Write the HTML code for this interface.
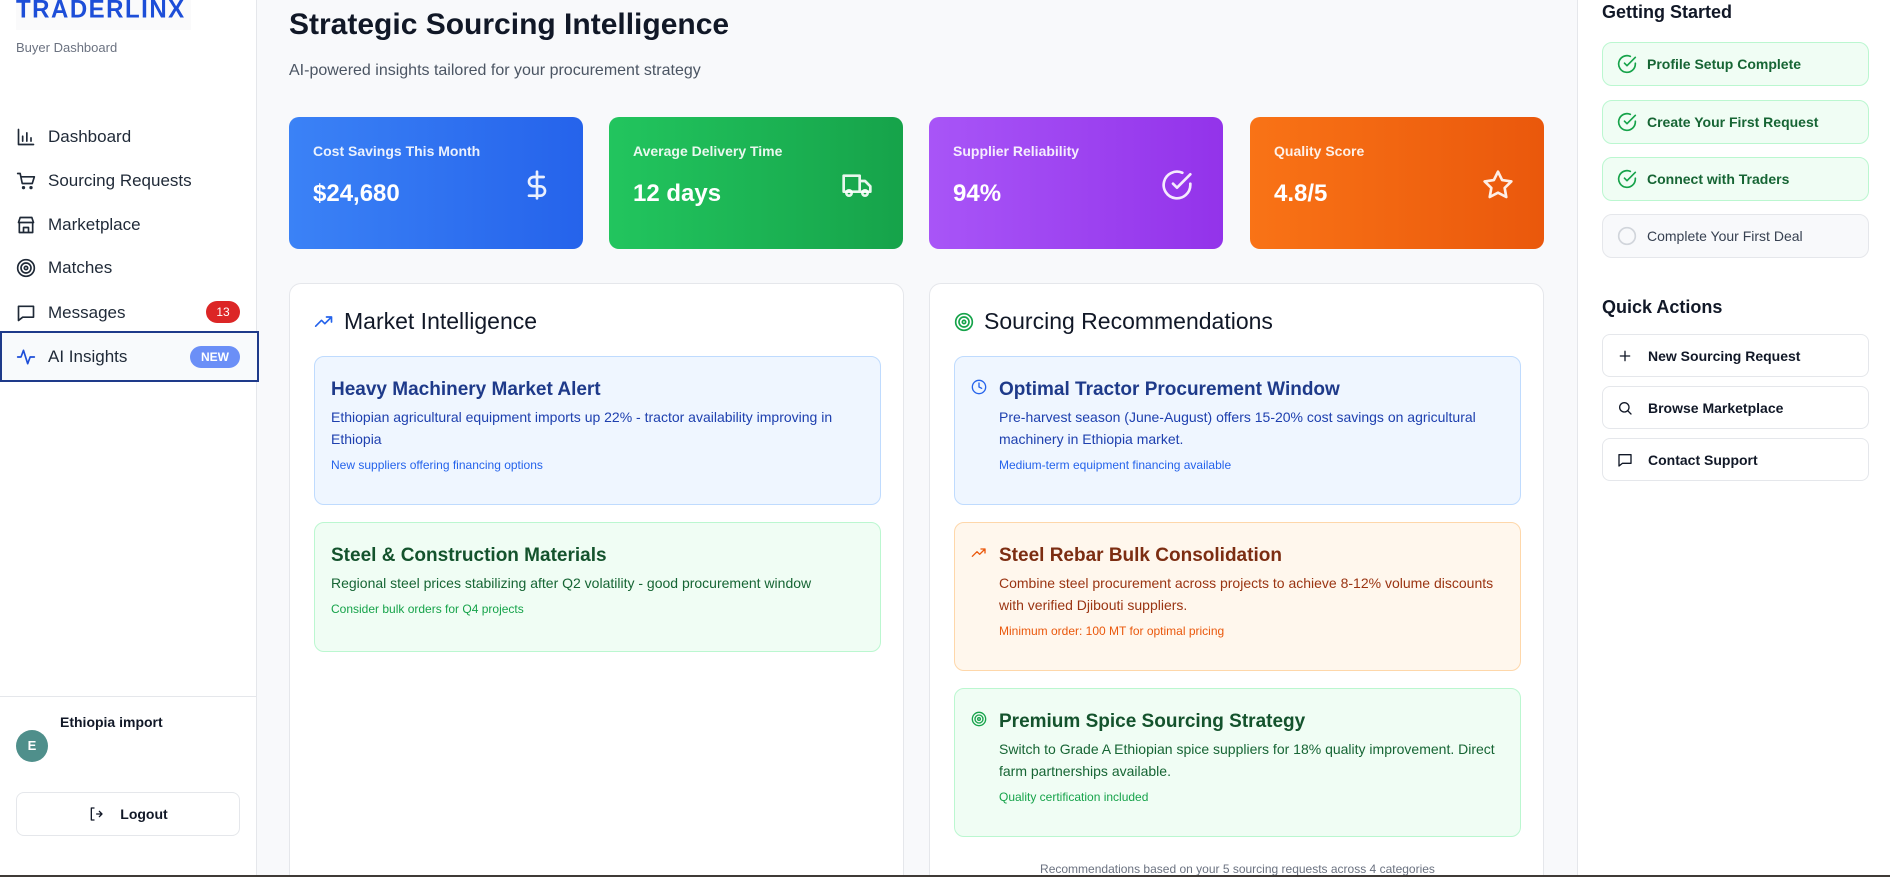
<!DOCTYPE html>
<html><head><meta charset="utf-8"><style>
*{box-sizing:border-box;margin:0;padding:0}
html{width:1890px;height:877px;overflow:hidden}
body{width:1890px;height:877px;overflow:hidden;background:#f8f9fb;font-family:"Liberation Sans",sans-serif;position:relative;color:#111827}
.abs{position:absolute}
.side{left:0;top:0;width:257px;height:877px;background:#fff;border-right:1px solid #e5e7eb}
.logo{left:16px;top:-4px;font-weight:900;font-size:24px;color:#1d4ed8;letter-spacing:1.5px;transform:scaleY(1.05)}
.nav{left:16px;font-size:17px;color:#1f2937;display:flex;align-items:center;height:24px}
.nav svg{width:20px;height:20px;margin-right:12px;fill:none;stroke:#1f2937;stroke-width:2;stroke-linecap:round;stroke-linejoin:round}
.stat{top:117px;width:294px;height:132px;border-radius:10px;color:#fff}
.stat .l{position:absolute;left:24px;top:26px;font-size:14px;font-weight:bold;opacity:.9}
.stat .v{position:absolute;left:24px;top:63px;font-size:24px;font-weight:bold}
.stat svg{position:absolute;right:30px;top:52px;width:32px;height:32px;fill:none;stroke:rgba(255,255,255,.9);stroke-width:2;stroke-linecap:round;stroke-linejoin:round}
.panel{top:283px;height:594px;background:#fff;border:1px solid #e5e7eb;border-bottom:none;border-radius:12px 12px 0 0}
.ph{position:absolute;top:24px;font-size:23px;color:#111827;display:flex;align-items:center}
.card{border-radius:10px;border:1px solid}
.card h3{position:absolute;top:22px;font-size:19px;font-weight:bold}
.card p{position:absolute;top:49px;font-size:14px;line-height:22px}
.card .n{position:absolute;font-size:12px}
.blue{background:#eff6ff;border-color:#bfdbfe}.blue h3{color:#1e3a8a}.blue p{color:#1e40af}.blue .n{color:#2563eb}
.green{background:#f0fdf4;border-color:#bbf7d0}.green h3{color:#14532d}.green p{color:#166534}.green .n{color:#16a34a}
.orange{background:#fff7ed;border-color:#fed7aa}.orange h3{color:#7c2d12}.orange p{color:#9a3412}.orange .n{color:#ea580c}
.right{left:1577px;top:0;width:313px;height:877px;background:#fff;border-left:1px solid #e5e7eb}
.gs{left:1602px;width:267px;height:44px;border-radius:10px;border:1px solid #bbf7d0;background:#f0fdf4;display:flex;align-items:center;font-size:14px;font-weight:bold;color:#166534;padding-left:14px}
.gs svg{width:20px;height:20px;margin-right:10px;fill:none;stroke:#16a34a;stroke-width:2;stroke-linecap:round;stroke-linejoin:round}
.qa{left:1602px;width:267px;height:43px;border-radius:8px;border:1px solid #e5e7eb;background:#fff;display:flex;align-items:center;font-size:14px;font-weight:bold;color:#111827;padding-left:14px}
.qa svg{width:16px;height:16px;margin-right:15px;fill:none;stroke:#111827;stroke-width:2;stroke-linecap:round;stroke-linejoin:round}
.ci{position:absolute;left:16px;top:22px;width:16px;height:16px;fill:none;stroke-width:2;stroke-linecap:round;stroke-linejoin:round}
</style></head><body>
<div class="abs side"></div>
<div class="abs" style="left:16px;top:0;width:175px;height:30px;background:#fafafb"></div>
<div class="abs logo">TRADERLINX</div>
<div class="abs" style="left:16px;top:40px;font-size:13px;color:#6b7280">Buyer Dashboard</div>

<div class="abs nav" style="top:125px"><svg viewBox="0 0 24 24"><path d="M3 3v18h18M8 17v-6M13 17V7M18 17v-4"/></svg>Dashboard</div>
<div class="abs nav" style="top:169px"><svg viewBox="0 0 24 24"><path d="M2 3h3l2.5 12h12L22 7H6"/><circle cx="9" cy="20" r="1"/><circle cx="18" cy="20" r="1"/></svg>Sourcing Requests</div>
<div class="abs nav" style="top:213px"><svg viewBox="0 0 24 24"><path d="M4 9V21h16V9M3 9l2-6h14l2 6zM9 21v-6h6v6M3 9h18"/></svg>Marketplace</div>
<div class="abs nav" style="top:256px"><svg viewBox="0 0 24 24"><circle cx="12" cy="12" r="10"/><circle cx="12" cy="12" r="6"/><circle cx="12" cy="12" r="2"/></svg>Matches</div>
<div class="abs nav" style="top:301px"><svg viewBox="0 0 24 24"><path d="M3 4h18v13H8l-5 4z"/></svg>Messages</div>
<div class="abs" style="left:206px;top:301px;width:34px;height:22px;border-radius:11px;background:#dc2626;color:#fff;font-size:12px;text-align:center;line-height:22px">13</div>
<div class="abs" style="left:0;top:331px;width:259px;height:51px;border:2px solid #1e3a8a;background:#f8fafc"></div>
<div class="abs nav" style="top:345px"><svg viewBox="0 0 24 24" style="stroke:#1d4ed8"><path d="M2 12h4l3-8 5 16 3-8h5"/></svg>AI Insights</div>
<div class="abs" style="left:190px;top:346px;width:50px;height:22px;border-radius:11px;background:#6b8ff7;color:#fff;font-size:12px;font-weight:bold;text-align:center;line-height:22px">NEW</div>

<div class="abs" style="left:0;top:696px;width:257px;height:1px;background:#e5e7eb"></div>
<div class="abs" style="left:60px;top:714px;font-size:14px;font-weight:bold;color:#111827">Ethiopia import</div>
<div class="abs" style="left:16px;top:730px;width:32px;height:32px;border-radius:50%;background:#4f8f8b;color:#fff;font-size:13px;font-weight:bold;text-align:center;line-height:32px">E</div>
<div class="abs" style="left:16px;top:792px;width:224px;height:44px;border:1px solid #e5e7eb;border-radius:8px;display:flex;align-items:center;justify-content:center;font-size:14px;font-weight:bold;color:#111827"><svg viewBox="0 0 24 24" style="width:16px;height:16px;margin-right:16px;fill:none;stroke:#111827;stroke-width:2;stroke-linecap:round;stroke-linejoin:round"><path d="M9 3H5v18h4M13 12h8M17 8l4 4-4 4"/></svg>Logout</div>

<div class="abs" style="left:289px;top:8px;font-size:30px;font-weight:bold;color:#111827">Strategic Sourcing Intelligence</div>
<div class="abs" style="left:289px;top:62px;font-size:16px;color:#4b5563">AI-powered insights tailored for your procurement strategy</div>

<div class="abs stat" style="left:289px;background:linear-gradient(90deg,#3b82f6,#2563eb)"><div class="l">Cost Savings This Month</div><div class="v">$24,680</div><svg viewBox="0 0 24 24"><path d="M12 2v20M17 6H9.5a3.5 3.5 0 0 0 0 7h5a3.5 3.5 0 0 1 0 7H6"/></svg></div>
<div class="abs stat" style="left:609px;background:linear-gradient(90deg,#22c55e,#16a34a)"><div class="l">Average Delivery Time</div><div class="v">12 days</div><svg viewBox="0 0 24 24"><path d="M2 5h12v12H2zM14 9h4l4 4v4h-8"/><circle cx="6" cy="18" r="2"/><circle cx="18" cy="18" r="2"/></svg></div>
<div class="abs stat" style="left:929px;background:linear-gradient(90deg,#a855f7,#9333ea)"><div class="l">Supplier Reliability</div><div class="v">94%</div><svg viewBox="0 0 24 24"><path d="M22 11v1a10 10 0 1 1-6-9.2"/><path d="M9 11l3 3L22 4"/></svg></div>
<div class="abs stat" style="left:1250px;background:linear-gradient(90deg,#f97316,#ea580c)"><div class="l">Quality Score</div><div class="v">4.8/5</div><svg viewBox="0 0 24 24"><path d="M12 2l3.1 6.3 6.9 1-5 4.9 1.2 6.8L12 17.8 5.8 21l1.2-6.8-5-4.9 6.9-1z"/></svg></div>

<div class="abs panel" style="left:289px;width:615px">
 <div class="ph" style="left:24px"><svg viewBox="0 0 24 24" style="width:20px;height:20px;margin-right:10px;fill:none;stroke:#2563eb;stroke-width:2;stroke-linecap:round;stroke-linejoin:round"><path d="M2 17l7-7 4 4 8-8M15 6h6v6"/></svg>Market Intelligence</div>
 <div class="abs card blue" style="left:24px;top:72px;width:567px;height:149px"><h3 style="left:16px">Heavy Machinery Market Alert</h3><p style="left:16px;width:540px">Ethiopian agricultural equipment imports up 22% - tractor availability improving in Ethiopia</p><div class="n" style="left:16px;top:101px">New suppliers offering financing options</div></div>
 <div class="abs card green" style="left:24px;top:238px;width:567px;height:130px"><h3 style="left:16px">Steel &amp; Construction Materials</h3><p style="left:16px;width:540px">Regional steel prices stabilizing after Q2 volatility - good procurement window</p><div class="n" style="left:16px;top:79px">Consider bulk orders for Q4 projects</div></div>
</div>

<div class="abs panel" style="left:929px;width:615px">
 <div class="ph" style="left:24px"><svg viewBox="0 0 24 24" style="width:20px;height:20px;margin-right:10px;fill:none;stroke:#16a34a;stroke-width:2"><circle cx="12" cy="12" r="10"/><circle cx="12" cy="12" r="6"/><circle cx="12" cy="12" r="2"/></svg>Sourcing Recommendations</div>
 <div class="abs card blue" style="left:24px;top:72px;width:567px;height:149px"><svg class="ci" viewBox="0 0 24 24" style="stroke:#2563eb"><circle cx="12" cy="12" r="10"/><path d="M12 6v6l4 2"/></svg><h3 style="left:44px">Optimal Tractor Procurement Window</h3><p style="left:44px;width:510px">Pre-harvest season (June-August) offers 15-20% cost savings on agricultural machinery in Ethiopia market.</p><div class="n" style="left:44px;top:101px">Medium-term equipment financing available</div></div>
 <div class="abs card orange" style="left:24px;top:238px;width:567px;height:149px"><svg class="ci" viewBox="0 0 24 24" style="stroke:#ea580c"><path d="M2 17l7-7 4 4 8-8M15 6h6v6"/></svg><h3 style="left:44px">Steel Rebar Bulk Consolidation</h3><p style="left:44px;width:515px">Combine steel procurement across projects to achieve 8-12% volume discounts with verified Djibouti suppliers.</p><div class="n" style="left:44px;top:101px">Minimum order: 100 MT for optimal pricing</div></div>
 <div class="abs card green" style="left:24px;top:404px;width:567px;height:149px"><svg class="ci" viewBox="0 0 24 24" style="stroke:#16a34a"><circle cx="12" cy="12" r="10"/><circle cx="12" cy="12" r="6"/><circle cx="12" cy="12" r="2"/></svg><h3 style="left:44px">Premium Spice Sourcing Strategy</h3><p style="left:44px;width:500px">Switch to Grade A Ethiopian spice suppliers for 18% quality improvement. Direct farm partnerships available.</p><div class="n" style="left:44px;top:101px">Quality certification included</div></div>
 <div class="abs" style="left:0;width:615px;top:578px;text-align:center;font-size:12px;color:#6b7280">Recommendations based on your 5 sourcing requests across 4 categories</div>
</div>

<div class="abs right"></div>
<div class="abs" style="left:1602px;top:2px;font-size:18px;font-weight:bold;color:#111827">Getting Started</div>
<div class="abs gs" style="top:42px"><svg viewBox="0 0 24 24"><path d="M22 11v1a10 10 0 1 1-6-9.2"/><path d="M9 11l3 3L22 4"/></svg>Profile Setup Complete</div>
<div class="abs gs" style="top:100px"><svg viewBox="0 0 24 24"><path d="M22 11v1a10 10 0 1 1-6-9.2"/><path d="M9 11l3 3L22 4"/></svg>Create Your First Request</div>
<div class="abs gs" style="top:157px"><svg viewBox="0 0 24 24"><path d="M22 11v1a10 10 0 1 1-6-9.2"/><path d="M9 11l3 3L22 4"/></svg>Connect with Traders</div>
<div class="abs gs" style="top:214px;background:#f8f9fb;border-color:#e5e7eb;color:#374151;font-weight:normal"><svg viewBox="0 0 24 24" style="stroke:#d1d5db"><circle cx="12" cy="12" r="10"/></svg>Complete Your First Deal</div>
<div class="abs" style="left:1602px;top:297px;font-size:18px;font-weight:bold;color:#111827">Quick Actions</div>
<div class="abs qa" style="top:334px"><svg viewBox="0 0 24 24"><path d="M12 5v14M5 12h14"/></svg>New Sourcing Request</div>
<div class="abs qa" style="top:386px"><svg viewBox="0 0 24 24"><circle cx="11" cy="11" r="7"/><path d="M21 21l-5-5"/></svg>Browse Marketplace</div>
<div class="abs qa" style="top:438px"><svg viewBox="0 0 24 24"><path d="M3 4h18v13H8l-5 4z"/></svg>Contact Support</div>
<div class="abs" style="left:0;top:875px;width:1890px;height:2px;background:#3f3a36"></div>
</body></html>
